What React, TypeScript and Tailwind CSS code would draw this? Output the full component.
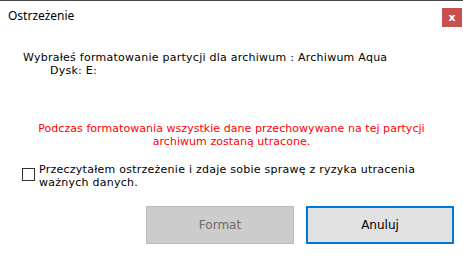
import React from 'react';

const App: React.FC = () => {
  return (
    <div className="h-[257px] w-[463px] overflow-hidden border-t border-[#474747] bg-white">
      <div className="flex h-[31px] items-start justify-between">
        <span className="mt-[7px] pl-2 text-[12px] leading-[16px] text-black [font-family:'Noto_Sans',sans-serif]">
          Ostrzeżenie
        </span>
        <div className="mr-[1px] mt-[7px] flex h-[19px] w-5 items-center justify-center bg-[#c75050] text-[11px] font-bold leading-none text-white [font-family:'DejaVu_Sans',sans-serif]">
          x
        </div>
      </div>
      <div className="text-[11px] leading-[13px] tracking-[0.25px] text-black [font-family:'DejaVu_Sans',Verdana,sans-serif]">
        <div className="mt-[19px] pl-[23px]">
          <p>Wybrałeś formatowanie partycji dla archiwum : Archiwum Aqua</p>
          <p className="pl-[27px]">Dysk: E:</p>
        </div>
        <p className="mt-[45px] text-center tracking-[0.05px] text-[#ff0000]">
          Podczas formatowania wszystkie dane przechowywane na tej partycji
          <br />
          archiwum zostaną utracone.
        </p>
        <label className="mt-[15px] flex items-start gap-[4px] pl-[22px]">
          <span className="mt-[5px] h-[13px] w-[13px] shrink-0 border border-[#333333] bg-white" />
          <span className="w-[385px]">
            Przeczytałem ostrzeżenie i zdaje sobie sprawę z ryzyka utracenia ważnych danych.
          </span>
        </label>
        <div className="mt-[17px] flex gap-3 pl-[146px]">
          <button className="h-[38px] w-[148px] border border-[#bcbcbc] bg-[#cccccc] text-[12px] tracking-normal text-[#6d6d6d]">
            Format
          </button>
          <button className="h-[38px] w-[148px] border-2 border-[#0078d7] bg-[#e1e1e1] text-[12px] tracking-normal text-black">
            Anuluj
          </button>
        </div>
      </div>
    </div>
  );
};

export default App;
